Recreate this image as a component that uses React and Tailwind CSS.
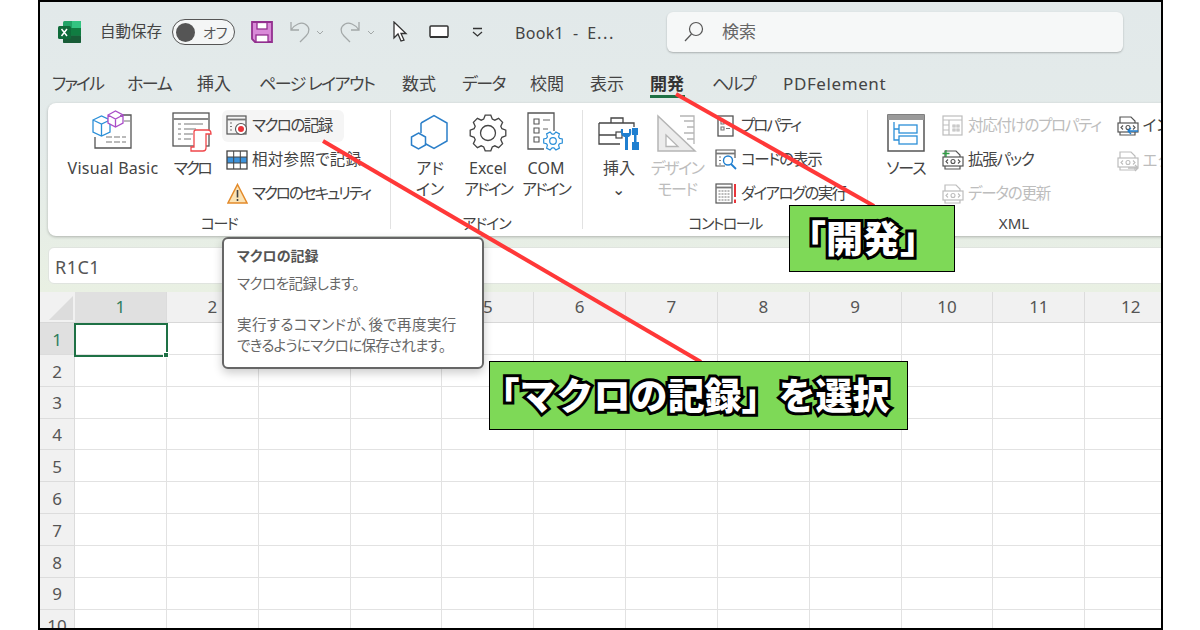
const sans = "font-['Noto_Sans','Noto_Sans_CJK_JP',sans-serif]";

function ExcelLogo() {
  return (
    <svg width="23" height="22" viewBox="0 0 23 22">
      <rect x="5" y="0" width="18" height="22" rx="1.5" fill="#21a366" />
      <rect x="14" y="0" width="9" height="7" fill="#33c481" />
      <rect x="5" y="7" width="18" height="7.5" fill="#107c41" />
      <rect x="5" y="14.5" width="18" height="7.5" rx="1" fill="#185c37" />
      <rect x="0" y="5" width="13" height="13" rx="1.5" fill="#0f6b3a" />
      <path d="M3.5 8l5.5 7M9 8l-5.500 7" stroke="#fff" strokeWidth="1.500" />
    </svg>
  );
}

function SaveIcon() {
  return (
    <svg width="22" height="22" viewBox="0 0 22 22">
      <path d="M1 1H21V21H4L1 18Z" fill="#d98ad8" stroke="#93308f" strokeWidth="1.800" />
      <rect x="6" y="1.500" width="10" height="6.500" fill="#fff" stroke="#93308f" strokeWidth="1.300" />
      <rect x="5" y="14" width="12" height="7" fill="#fff" stroke="#93308f" strokeWidth="1.300" />
    </svg>
  );
}

function VbIcon() {
  return (
    <svg width="42" height="42" viewBox="0 0 42 42" fill="none">
      <path d="M28 5H39V38H3V27" stroke="#555" strokeWidth="1.300" />
      <path d="M32 11H39M14 27H34M14 32H34" stroke="#777" strokeWidth="1.200" strokeDasharray="6 2" />
      <path d="M1 10L9.500 6L18 10V22L9.500 26L1 22ZM1 10L9.500 14L18 10M9.500 14V26" fill="#fff" stroke="#2b8fd8" strokeWidth="1.300" />
      <path d="M16 5L23.500 1L31 5V13L23.500 17L16 13ZM16 5L23.500 9L31 5M23.500 9V17" fill="#fff" stroke="#a94dc8" strokeWidth="1.300" />
    </svg>
  );
}

function MacroIcon() {
  return (
    <svg width="40" height="40" viewBox="0 0 40 40" fill="none">
      <rect x="1" y="1" width="36" height="33" stroke="#555" strokeWidth="1.300" />
      <path d="M1 7H37" stroke="#888" strokeWidth="2" />
      <path d="M6 12H9M12 12H31M6 17H9M12 17H24M6 22H9M12 22H21M6 27H9M12 27H19" stroke="#777" strokeWidth="1.200" />
      <path d="M22 35V20C22 18 23 18 24 18H36C38 18 39 19 39 22H34V36C34 38 33 39 31 39H19V35Z" fill="#fff" stroke="#f0474b" strokeWidth="1.300" />
    </svg>
  );
}

function RecordIcon() {
  return (
    <svg width="22" height="21" viewBox="0 0 22 21" fill="none">
      <rect x="1" y="1" width="19" height="18" stroke="#555" strokeWidth="1.200" />
      <path d="M1 4.500H20" stroke="#777" strokeWidth="1.800" />
      <path d="M4 8H6M4 11.500H6M4 15H6" stroke="#777" strokeWidth="1.200" />
      <circle cx="15" cy="14" r="5.500" fill="#fff" stroke="#555" strokeWidth="1.100" />
      <circle cx="15" cy="14" r="3" fill="#e8353b" />
    </svg>
  );
}

function RelativeIcon() {
  return (
    <svg width="22" height="20" viewBox="0 0 22 20" fill="none">
      <rect x="1" y="7" width="20" height="6" fill="#3d93dc" />
      <rect x="1" y="1" width="20" height="18" stroke="#444" strokeWidth="1.300" />
      <path d="M7.700 1V19M14.300 1V19M1 7H21M1 13H21" stroke="#444" strokeWidth="1" />
    </svg>
  );
}

function WarnIcon() {
  return (
    <svg width="21" height="21" viewBox="0 0 21 21">
      <path d="M10.500 1.500L20 20H1Z" fill="#fbe3b5" stroke="#e38a2a" strokeWidth="1.500" />
      <path d="M10.500 7V14.500M10.500 16V18" stroke="#444" strokeWidth="1.600" />
    </svg>
  );
}

function AddinIcon() {
  return (
    <svg width="40" height="38" viewBox="0 0 40 38" fill="none">
      <path d="M11 9L24 1.500L37 9V27L24 34.500L15 29.500" stroke="#2b7fc9" strokeWidth="1.500" />
      <path d="M8.500 19L15.500 23V31L8.500 35L1.500 31V23Z" stroke="#2b7fc9" strokeWidth="1.500" />
      <path d="M11 9V19" stroke="#2b7fc9" strokeWidth="1.500" />
    </svg>
  );
}

function gearPath(cx, cy, r1, r2, teeth) {
  let d = "";
  const step = (Math.PI * 2) / teeth;
  for (let i = 0; i < teeth; i++) {
    const a = i * step;
    const pts = [
      [r1, a - step * 0.38],
      [r2, a - step * 0.2],
      [r2, a + step * 0.2],
      [r1, a + step * 0.38],
    ];
    pts.forEach(([r, t], j) => {
      const x = (cx + r * Math.cos(t)).toFixed(1);
      const y = (cy + r * Math.sin(t)).toFixed(1);
      d += (i === 0 && j === 0 ? "M" : "L") + x + " " + y;
    });
  }
  return d + "Z";
}

function GearIcon() {
  return (
    <svg width="38" height="38" viewBox="0 0 38 38" fill="none">
      <path d={gearPath(19, 19, 14.500, 18, 8)} stroke="#444" strokeWidth="1.300" />
      <circle cx="19" cy="19" r="7.500" stroke="#444" strokeWidth="1.300" />
    </svg>
  );
}

function ComIcon() {
  return (
    <svg width="38" height="40" viewBox="0 0 38 40" fill="none">
      <path d="M27 19V1H1V37H17" stroke="#555" strokeWidth="1.300" />
      <path d="M7 7h5v5H7zM7 16h5v5H7zM7 25h5v5H7z" stroke="#555" strokeWidth="1.100" />
      <path d="M16 8H23M16 17H21" stroke="#666" strokeWidth="1.200" />
      <path d={gearPath(26, 29, 7, 9.500, 6)} fill="#fff" stroke="#2b8fd8" strokeWidth="1.200" />
      <circle cx="26" cy="29" r="3.300" stroke="#2b8fd8" strokeWidth="1.200" />
    </svg>
  );
}

function InsertIcon() {
  return (
    <svg width="42" height="38" viewBox="0 0 42 38" fill="none">
      <path d="M1 9H36V13M1 9V30H22M1 21H18M26 21H24" stroke="#444" strokeWidth="1.300" />
      <path d="M13 9V4H25V9" stroke="#444" strokeWidth="1.300" />
      <rect x="18" y="18" width="6" height="6" fill="#fff" stroke="#444" strokeWidth="1.200" />
      <path d="M23 15C22 21 25 23 27 23V36H30V23C32 23 34 21 33 15H31V19H25V15Z" fill="#1f7fd0" />
      <path d="M34 14H40V21H38.500V28H41V36H34V28H36V21H34Z" fill="#1f7fd0" />
    </svg>
  );
}

function DesignIcon() {
  return (
    <svg width="40" height="38" viewBox="0 0 40 38" fill="none">
      <path d="M1 2L38 37H1Z" fill="#ececec" stroke="#b5b5b5" strokeWidth="1.500" />
      <path d="M9 21L21 32.500H9Z" fill="#fff" stroke="#b5b5b5" strokeWidth="1.300" />
      <path d="M23 2H37V30M27 7H37M30 13H37M27 19H37M30 25H37" stroke="#b5b5b5" strokeWidth="1.300" />
    </svg>
  );
}

function PropIcon() {
  return (
    <svg width="20" height="22" viewBox="0 0 20 22" fill="none">
      <rect x="2" y="1" width="15" height="20" stroke="#555" strokeWidth="1.300" />
      <path d="M5 6h3v3H5zM5 12h3v3H5zM10 7.500h4M10 13.500h4" stroke="#777" strokeWidth="1.100" />
    </svg>
  );
}

function CodeViewIcon() {
  return (
    <svg width="22" height="21" viewBox="0 0 22 21" fill="none">
      <path d="M10 17H1V1H20V9" stroke="#555" strokeWidth="1.200" />
      <path d="M1 4.500H20" stroke="#777" strokeWidth="1.800" />
      <path d="M4 8H6M4 11.500H6M4 15H6" stroke="#777" strokeWidth="1.200" />
      <circle cx="13" cy="11.500" r="4.500" fill="#fff" stroke="#1f7fd0" strokeWidth="1.400" />
      <path d="M16 15L21 20" stroke="#1f7fd0" strokeWidth="1.800" />
    </svg>
  );
}

function DialogIcon() {
  return (
    <svg width="22" height="21" viewBox="0 0 22 21" fill="none">
      <rect x="1" y="1" width="16" height="19" stroke="#555" strokeWidth="1.200" />
      <path d="M1 4.500H17" stroke="#777" strokeWidth="1.800" />
      <path d="M3.500 8H14.500M3.500 11H14.500M3.500 14H14.500M3.500 17H14.500" stroke="#777" strokeWidth="1.100" strokeDasharray="2 1" />
      <path d="M20 1V14M20 16.500V20" stroke="#e8353b" strokeWidth="2" />
    </svg>
  );
}

function SourceIcon() {
  return (
    <svg width="38" height="38" viewBox="0 0 38 38" fill="none">
      <rect x="1" y="1" width="36" height="36" fill="#fff" stroke="#555" strokeWidth="1.500" />
      <rect x="1" y="1" width="36" height="5" fill="#9a9a9a" />
      <path d="M7 8V26H12M7 15H12" stroke="#2b8fd8" strokeWidth="1.300" />
      <rect x="12" y="11" width="18" height="8" stroke="#2b8fd8" strokeWidth="1.300" />
      <rect x="12" y="22" width="18" height="8" stroke="#2b8fd8" strokeWidth="1.300" />
    </svg>
  );
}

function MapPropIcon() {
  return (
    <svg width="22" height="21" viewBox="0 0 22 21" fill="none" stroke="#bdbdbd" strokeWidth="1.200">
      <rect x="1" y="1" width="19" height="19" />
      <path d="M1 5H20M7 5V20M1 10H7M1 15H7" />
      <path d="M11 10h2v2h-2zM15 10h2v2h-2zM11 14h2v2h-2zM15 14h2v2h-2z" />
    </svg>
  );
}

function XmlIcon({ color = "#555", badge }) {
  return (
    <svg width="22" height="22" viewBox="0 0 22 22" fill="none">
      <path d="M3 8V2H14L18 6V8M3 17V20H18V17" stroke={color} strokeWidth="1.200" />
      <rect x="1" y="8" width="20" height="9" fill="#fff" stroke={color} strokeWidth="1.200" />
      <path d="M6 10.500L4 12.500L6 14.500M16 10.500L18 12.500L16 14.500" stroke={color} strokeWidth="1.100" />
      <circle cx="11" cy="12.500" r="2" stroke={color} strokeWidth="1.100" />
      {badge === "plus" && <path d="M4 1V8M0.500 4.500H7.500" stroke="#2f9e44" strokeWidth="1.300" />}
      {badge === "in" && <path d="M21 16H11M14 13L11 16L14 19" stroke="#1f7fd0" strokeWidth="1.300" />}
      {badge === "out" && <path d="M11 18H21M18 15L21 18L18 21" stroke="#bdbdbd" strokeWidth="1.300" />}
    </svg>
  );
}

function BigButton({ icon, lines, gray, width, className = "", track = "" }) {
  return (
    <div className={`flex flex-col items-center shrink-0 ${className}`} style={{ width }}>
      <div className="h-[43px] flex items-end justify-center">{icon}</div>
      <div className={`mt-[6px] text-center text-[16px] leading-[20.5px] whitespace-nowrap ${gray ? "text-[#bdbdbd]" : "text-[#444]"}`}>
        {lines.map((line) => (
          <div key={line} className={/[a-zA-Z⌄]/.test(line) ? "" : track}>{line}</div>
        ))}
      </div>
    </div>
  );
}

function SmallButton({ icon, label, gray, active, track = "" }) {
  return (
    <div className={`h-[32px] self-start flex items-center gap-[4px] pl-[4px] pr-[12px] rounded-md whitespace-nowrap text-[15.5px] mb-[2.5px] ${active ? "bg-[#f5f5f5]" : ""} ${gray ? "text-[#bdbdbd]" : "text-[#444]"}`}>
      <div className="w-[22px] flex justify-center shrink-0">{icon}</div>
      <span className={track}>{label}</span>
    </div>
  );
}

function Group({ label, width, children, sep = true, track = "" }) {
  return (
    <div className="flex shrink-0 h-full" style={{ width }}>
      <div className="flex-1 min-w-0 flex flex-col pt-[6px]">
        <div className="flex-1 flex min-h-0">{children}</div>
        <div className={`h-[24px] text-center text-[15px] text-[#444] shrink-0 ${track}`}>{label}</div>
      </div>
      {sep && <div className="w-px bg-[#e2e2e2] my-[7px]" />}
    </div>
  );
}

const tabs = [
  ["ファイル", "w-[75px] tracking-[-2px]"],
  ["ホーム", "w-[70px] tracking-[-1.5px]"],
  ["挿入", "w-[62px]"],
  ["ページ レイアウト", "w-[143px] tracking-[-1.5px]"],
  ["数式", "w-[60px]"],
  ["データ", "w-[68px] tracking-[-1.5px]"],
  ["校閲", "w-[60px]"],
  ["表示", "w-[60px]"],
  ["開発", "w-[62px]"],
  ["ヘルプ", "w-[71px] tracking-[-2px]"],
  ["PDFelement", "w-[110px] tracking-[0.6px]"],
];

const cols = [1, 2, 3, 4, 5, 6, 7, 8, 9, 10, 11, 12];
const rows = [1, 2, 3, 4, 5, 6, 7, 8, 9, 10];
// these two headers sit fully under the tooltip
const hiddenCols = [3, 4];

export default function App() {
  return (
    <div className={`w-[1200px] h-[630px] bg-white pl-[38px] overflow-hidden [font-feature-settings:'palt'] ${sans}`}>
      <div className="relative w-[1125px] h-[630px] border-2 border-black overflow-hidden bg-white flex flex-col">
        <div className="h-[290px] shrink-0 bg-gradient-to-b from-[#e2e9ea] via-[#e4ebea] to-[#e9f0e3] flex flex-col">
          {/* title bar */}
          <div className="h-[60px] shrink-0 flex items-center pl-[18px] text-[#444]">
            <ExcelLogo />
            <span className="ml-[19px] w-[63px] text-[15.5px] whitespace-nowrap">自動保存</span>
            <div className="ml-[9px] w-[63px] h-[26px] rounded-full border border-[#555] bg-[#f4f6f6] flex items-center pl-[3px]">
              <div className="w-[19px] h-[19px] rounded-full bg-[#555]" />
              <span className="ml-[8px] text-[14px] text-[#555]">オフ</span>
            </div>
            <div className="ml-[16px]"><SaveIcon /></div>
            <svg className="ml-[17px]" width="40" height="24" viewBox="0 0 40 24" fill="none" stroke="#a3a8a8" strokeWidth="1.300">
              <path d="M1 2V10H9M1 10C5 4 11 2 15 4C20 7 20 12 16 16L10 22" />
              <path d="M27 11L30 14L33 11" strokeWidth="1" />
            </svg>
            <svg className="ml-[10px]" width="40" height="24" viewBox="0 0 40 24" fill="none" stroke="#a3a8a8" strokeWidth="1.300">
              <path d="M19 2V10H11M19 10C15 4 9 2 5 4C0 7 0 12 4 16L10 22" />
              <path d="M28 11L31 14L34 11" strokeWidth="1" />
            </svg>
            <svg className="ml-[12px]" width="16" height="22" viewBox="0 0 16 22" fill="#fff" stroke="#333" strokeWidth="1.300">
              <path d="M2 1V17L6 13L9 20L12 19L9 12.500H14Z" />
            </svg>
            <svg className="ml-[21px]" width="20" height="14" viewBox="0 0 20 14" fill="none" stroke="#333">
              <rect x="1" y="1" width="18" height="11" rx="1" fill="#fff" strokeWidth="1.500" />
              <path d="M1 12H19" strokeWidth="2" />
            </svg>
            <svg className="ml-[23px]" width="11" height="10" viewBox="0 0 11 10" fill="none" stroke="#333" strokeWidth="1.300">
              <path d="M1 1.500H10M1 5L5.500 9L10 5" />
            </svg>
            <span className="ml-[32px] w-[102px] pt-[1px] text-[16px] tracking-[0.3px] whitespace-nowrap">Book1&nbsp; -&nbsp; E⋯</span>
            <div className="ml-[50px] w-[456px] h-[40px] rounded-md bg-[#f6f8f8] shadow-[0_1px_2px_rgba(0,0,0,0.25)] flex items-center pl-[17px] text-[17px] text-[#666]">
              <svg width="20" height="22" viewBox="0 0 20 22" fill="none" stroke="#555" strokeWidth="1.200">
                <circle cx="12" cy="8" r="6.500" />
                <path d="M7.500 13L1 20" />
              </svg>
              <span className="ml-[18px]">検索</span>
            </div>
          </div>

          {/* tabs */}
          <div className="h-[41px] shrink-0 flex items-center pl-[12px] pt-[2px] text-[17px] text-[#444]">
            {tabs.map(([name, w]) => (
              <div key={name} className={`${w} shrink-0 whitespace-nowrap relative ${name === "開発" ? "font-bold text-[#333]" : ""}`}>
                {name}
                {name === "開発" && <div className="absolute left-0 top-[24px] w-[35px] h-[3px] bg-[#1e7145]" />}
              </div>
            ))}
          </div>

          {/* ribbon */}
          <div className="h-[133px] shrink-0 ml-[8px] w-[1200px] bg-white rounded-l-lg shadow-[0_1px_3px_rgba(0,0,0,0.25)] flex">
            <Group label="コード" width={343} track="tracking-[-1.5px]">
              <BigButton width={92} className="ml-[19px] tracking-[0.3px]" icon={<VbIcon />} lines={["Visual Basic"]} />
              <BigButton width={44} className="ml-[11px]" track="tracking-[-2.5px]" icon={<MacroIcon />} lines={["マクロ"]} />
              <div className="ml-[8px] pt-[1px] flex flex-col">
                <SmallButton active track="tracking-[-1.5px]" icon={<RecordIcon />} label="マクロの記録" />
                <SmallButton track="tracking-[0.3px]" icon={<RelativeIcon />} label="相対参照で記録" />
                <SmallButton track="tracking-[-2px]" icon={<WarnIcon />} label="マクロのセキュリティ" />
              </div>
            </Group>
            <Group label="アドイン" width={192} track="tracking-[-1px]">
              <BigButton width={58} className="ml-[10px]" icon={<AddinIcon />} lines={["アド", "イン"]} />
              <BigButton width={58} track="tracking-[-2px]" icon={<GearIcon />} lines={["Excel", "アドイン"]} />
              <BigButton width={58} track="tracking-[-2px]" icon={<ComIcon />} lines={["COM", "アドイン"]} />
            </Group>
            <Group label="コントロール" width={285} track="tracking-[-1.5px]">
              <BigButton width={58} className="ml-[7px]" icon={<InsertIcon />} lines={["挿入", "⌄"]} />
              <BigButton width={58} track="tracking-[-1.5px]" icon={<DesignIcon />} gray lines={["デザイン", "モード"]} />
              <div className="ml-[5px] pt-[1px] flex flex-col">
                <SmallButton track="tracking-[-2px]" icon={<PropIcon />} label="プロパティ" />
                <SmallButton track="tracking-[-1.3px]" icon={<CodeViewIcon />} label="コードの表示" />
                <SmallButton track="tracking-[-1.6px]" icon={<DialogIcon />} label="ダイアログの実行" />
              </div>
            </Group>
            <Group label="XML" width={292} sep={false}>
              <BigButton width={60} className="ml-[8px]" track="tracking-[-1px]" icon={<SourceIcon />} lines={["ソース"]} />
              <div className="ml-[2px] pt-[1px] flex flex-col w-[178px]">
                <SmallButton gray track="tracking-[-1.300px]" icon={<MapPropIcon />} label="対応付けのプロパティ" />
                <SmallButton track="tracking-[-1.200px]" icon={<XmlIcon badge="plus" />} label="拡張パック" />
                <SmallButton gray track="tracking-[-1.200px]" icon={<XmlIcon color="#bdbdbd" />} label="データの更新" />
              </div>
              <div className="pt-[1px] flex flex-col">
                <SmallButton icon={<XmlIcon badge="in" />} label="インポート" />
                <SmallButton gray icon={<XmlIcon color="#bdbdbd" badge="out" />} label="エクスポート" />
              </div>
            </Group>
          </div>

          {/* name box / formula bar */}
          <div className="mt-[11px] ml-[8px] h-[37px] w-[1200px] bg-white rounded-l-md border border-[#e0e4df] flex items-center pl-[6px] pt-[3px] text-[18px] tracking-[0.5px] text-[#555]">
            R1C1
          </div>
        </div>

        {/* sheet */}
        <div className="flex h-[31px] shrink-0 bg-[#f1f1f1] border-b border-[#d8d8d8]">
          <div className="w-[35px] shrink-0 flex items-end justify-end pr-[2px] pb-[2px]">
            <div className="w-0 h-0 border-l-[24px] border-l-transparent border-b-[24px] border-b-[#dcdcdc]" />
          </div>
          {cols.map((c) => (
            <div key={c} className={`w-[91.85px] shrink-0 flex items-center justify-center text-[17px] border-r border-[#dcdcdc] ${c === 1 ? "bg-[#e0e0e0] text-[#2f7d5c]" : "text-[#555]"}`}>
              {!hiddenCols.includes(c) && c}
            </div>
          ))}
        </div>
        {rows.map((r) => (
          <div key={r} className="flex h-[31.85px] shrink-0">
            <div className={`w-[35px] shrink-0 flex items-center justify-center pt-[2px] text-[17px] border-r border-b border-[#dcdcdc] ${r === 1 ? "bg-[#e0e0e0] text-[#2f7d5c]" : "bg-[#f1f1f1] text-[#555]"}`}>
              {r}
            </div>
            {cols.map((c) => (
              <div key={c} className="w-[91.85px] shrink-0 border-r border-b border-[#e2e2e2]" />
            ))}
          </div>
        ))}

        {/* selected cell */}
        <div className="absolute left-[34px] top-[321px] w-[94px] h-[34px] border-2 border-[#1e7145]">
          <div className="absolute -right-[3px] -bottom-[3px] w-[6px] h-[6px] bg-[#1e7145] border border-white" />
        </div>

        {/* tooltip */}
        <div className="absolute left-[182px] top-[235px] w-[262px] h-[132px] bg-white border-2 border-[#666] rounded-md shadow-[0_4px_10px_rgba(0,0,0,0.2)] pl-[13px] pt-[6px] text-[14.5px] leading-[21px] text-[#666]">
          <div className="font-bold text-[14px] text-[#555]">マクロの記録</div>
          <div className="mt-[7px] tracking-[-0.5px]">マクロを記録します。</div>
          <div className="mt-[20px] tracking-[0.4px]">実行するコマンドが、後で再度実行</div>
          <div className="tracking-[-0.7px]">できるようにマクロに保存されます。</div>
        </div>

        {/* annotation lines */}
        <svg className="absolute left-0 top-0 pointer-events-none" width="1125" height="630" fill="none" stroke="#ff3838" strokeWidth="4">
          <path d="M636 92L834 204" />
          <path d="M283 139L661 360" />
        </svg>

        {/* callouts */}
        <div className="absolute left-[749px] top-[203px] w-[166px] h-[67px] bg-[#7ed957] border border-black flex items-center justify-center pr-[18px] text-[37px] font-black text-white [font-feature-settings:normal] [-webkit-text-stroke:6px_#000] [paint-order:stroke_fill] whitespace-nowrap">
          「開発」
        </div>
        <div className="absolute left-[449px] top-[359px] w-[419px] h-[69px] bg-[#7ed957] border border-black flex items-center justify-center pr-[25px] text-[37px] font-black text-white [font-feature-settings:normal] [-webkit-text-stroke:6px_#000] [paint-order:stroke_fill] whitespace-nowrap">
          「マクロの記録」を選択
        </div>
      </div>
    </div>
  );
}
